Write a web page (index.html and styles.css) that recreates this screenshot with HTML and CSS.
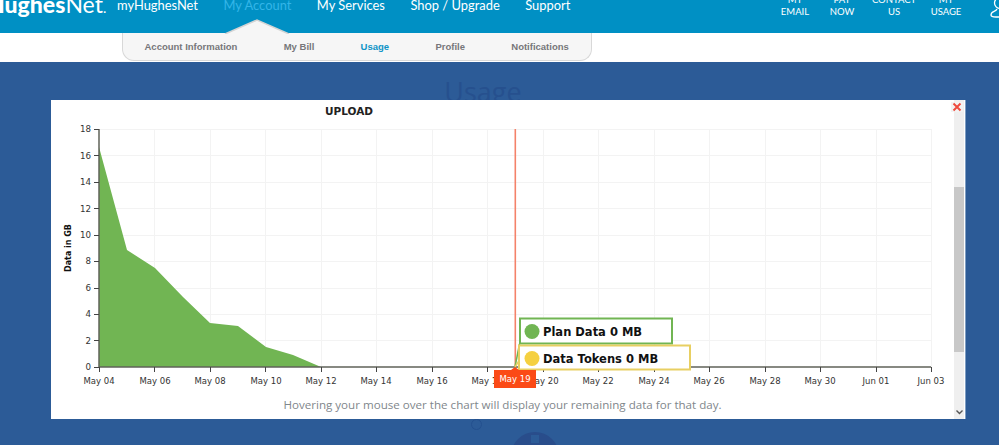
FILE: index.html
```html
<!DOCTYPE html>
<html lang="en">
<head>
    <meta charset="UTF-8">
    <meta name="viewport" content="width=device-width, initial-scale=1.0">
    <title>Usage</title>
    <link rel="stylesheet" href="styles.css">
</head>
<body>

    <div class="page">
        <header class="top-bar">
            <div class="logo"><b>Hughes</b>Net<span class="logo-dot">.</span></div>
            <nav class="main-nav">
                <a href="#">myHughesNet</a>
                <a href="#" class="active">My Account</a>
                <a href="#">My Services</a>
                <a href="#">Shop / Upgrade</a>
                <a href="#">Support</a>
            </nav>
            <nav class="quick-nav">
                <a href="#" class="quick-email">MY<br>EMAIL</a>
                <a href="#" class="quick-pay">PAY<br>NOW</a>
                <a href="#" class="quick-contact">CONTACT<br>US</a>
                <a href="#" class="quick-usage">MY<br>USAGE</a>
            </nav>
            <svg class="user-icon" width="20" height="24" viewBox="0 0 20 24">
                <circle cx="10" cy="6" r="5.5" fill="none" stroke="#fff" stroke-width="1.3"/>
                <path d="M7 12 C6 15 1 14 1 18 C1 20 3 20 6 20 H18" fill="none" stroke="#fff" stroke-width="1.3"/>
            </svg>
        </header>

        <div class="sub-strip">
            <nav class="sub-nav">
                <svg class="sub-nav-arrow" width="66" height="15" viewBox="0 0 66 15">
                    <path d="M1 15 L33 1 L65 15 Z" fill="#f6f6f6"/>
                    <path d="M1 15 L33 1 L65 15" fill="none" stroke="#d4d4d4" stroke-width="1.5"/>
                </svg>
                <a href="#">Account Information</a>
                <a href="#">My Bill</a>
                <a href="#" class="active">Usage</a>
                <a href="#">Profile</a>
                <a href="#">Notifications</a>
            </nav>
        </div>

        <main class="content">
            <h1>Usage</h1>
            <div class="spinner"></div>
            <div class="info-badge"><span class="info-dot"></span></div>
        </main>
    </div>

    <div class="modal">
        <div class="modal-body">
            <div class="chart-title">UPLOAD</div>
            <svg class="chart" width="903" height="270" viewBox="51 122 903 270">
                <!-- grid -->
                <path class="grid" d="M154.5 129V367M210.5 129V367M265.5 129V367M321.5 129V367M376.5 129V367M432.5 129V367M487.5 129V367M543.5 129V367M598.5 129V367M654.5 129V367M709.5 129V367M765.5 129V367M820.5 129V367M876.5 129V367M931.5 129V367"/>
                <path class="grid" d="M99 129.5H931M99 155.5H931M99 182.5H931M99 208.5H931M99 235.5H931M99 261.5H931M99 288.5H931M99 314.5H931M99 340.5H931"/>

                <!-- data -->
                <polygon class="area" points="99,367 99,147 127,250 155,268 183,297 210,323 238,326 266,347 293,355 321,367"/>

                <!-- axes -->
                <path class="axis" d="M99 129V367H931"/>
                <path class="tick" d="M94 129.5H99M94 155.5H99M94 182.5H99M94 208.5H99M94 235.5H99M94 261.5H99M94 288.5H99M94 314.5H99M94 340.5H99M94 367.5H99"/>
                <path class="tick" d="M99.5 367V372M154.5 367V372M210.5 367V372M265.5 367V372M321.5 367V372M376.5 367V372M432.5 367V372M487.5 367V372M543.5 367V372M598.5 367V372M654.5 367V372M709.5 367V372M765.5 367V372M820.5 367V372M876.5 367V372M931.5 367V372"/>
                <path class="cursor" d="M515.3 129V367"/>

                <g class="y-labels">
                    <text x="91" y="132">18</text>
                    <text x="91" y="159">16</text>
                    <text x="91" y="185">14</text>
                    <text x="91" y="212">12</text>
                    <text x="91" y="238">10</text>
                    <text x="91" y="264">8</text>
                    <text x="91" y="291">6</text>
                    <text x="91" y="317">4</text>
                    <text x="91" y="344">2</text>
                    <text x="91" y="370">0</text>
                </g>
                <text class="y-title" transform="translate(71 248) rotate(-90)">Data in GB</text>
                <g class="x-labels">
                    <text x="99" y="384">May 04</text>
                    <text x="155" y="384">May 06</text>
                    <text x="210" y="384">May 08</text>
                    <text x="266" y="384">May 10</text>
                    <text x="321" y="384">May 12</text>
                    <text x="376" y="384">May 14</text>
                    <text x="432" y="384">May 16</text>
                    <text x="487" y="384">May 18</text>
                    <text x="543" y="384">May 20</text>
                    <text x="598" y="384">May 22</text>
                    <text x="654" y="384">May 24</text>
                    <text x="709" y="384">May 26</text>
                    <text x="765" y="384">May 28</text>
                    <text x="820" y="384">May 30</text>
                    <text x="876" y="384">Jun 01</text>
                    <text x="931" y="384">Jun 03</text>
                </g>

                <!-- hover tooltips -->
                <path class="link-green" d="M515 367 L519.5 344"/>
                <path class="link-yellow" d="M515 367 L519.5 360"/>
                <rect class="tip tip-green" x="520" y="318.500" width="152" height="25"/>
                <circle class="dot-green" cx="532" cy="331.500" r="7.500"/>
                <text class="tip-text" x="543" y="336">Plan Data 0 MB</text>
                <rect class="tip tip-yellow" x="519" y="345.500" width="171" height="24"/>
                <circle class="dot-yellow" cx="532" cy="358.500" r="7.500"/>
                <text class="tip-text" x="543" y="363">Data Tokens 0 MB</text>
                <path class="date-tag" d="M494 370H511L515 367L519 370H536V388H494Z"/>
                <text class="date-text" x="515" y="381.500">May 19</text>
            </svg>
            <p class="chart-note">Hovering your mouse over the chart will display your remaining data for that day.</p>
        </div>
        <div class="scrollbar">
            <div class="scroll-thumb"></div>
            <svg class="scroll-down" width="7" height="5" viewBox="0 0 7 5">
                <path d="M0.500 0.500 L3.500 3.500 L6.500 0.500" fill="none" stroke="#555" stroke-width="1.400"/>
            </svg>
        </div>
        <svg class="modal-close" width="10" height="10" viewBox="0 0 10 10">
            <path d="M1.500 1.500 L8.500 8.500 M8.500 1.500 L1.500 8.500" stroke="#ee4b3e" stroke-width="2"/>
        </svg>
    </div>

</body>
</html>
```

FILE: styles.css
```css
/* Global Styles */
html, body {
    margin: 0;
    padding: 0;
    height: 100%;
    overflow: hidden;
}

body {
    font-family: "Open Sans", Arial, sans-serif;
    background-color: #2c5b97;
    position: relative;
}

a {
    text-decoration: none;
    color: inherit;
}

/* the window is scrolled a little, so the header starts above the fold */
.page {
    margin-top: -20px;
}

.top-bar {
    height: 53px;
    background-color: #0090c4;
    color: #fff;
    display: flex;
    align-items: flex-start;
    position: relative;
    overflow: hidden;
}

.logo {
    margin: 10px 0 0 -13px;
    width: 130px;
    flex-shrink: 0;
    font-family: "Lato", sans-serif;
    font-size: 23px;
    line-height: 28px;
    white-space: nowrap;
}

.logo b {
    font-weight: 900;
}

.logo-dot {
    font-size: 14px;
}

.main-nav {
    display: flex;
    gap: 25.500px;
    font-family: "Lato", sans-serif;
    font-size: 12.900px;
    line-height: 20px;
    margin-top: 15px;
    white-space: nowrap;
}

.main-nav .active {
    color: #33b5e8;
}

.quick-nav {
    display: flex;
    margin-left: auto;
    margin-top: 14px;
    font-family: "Lato", sans-serif;
    font-size: 9.500px;
    line-height: 12px;
    text-align: center;
    white-space: nowrap;
}

.quick-email { width: 46px; }
.quick-pay { width: 48px; }
.quick-contact { width: 56px; }
.quick-usage { width: 48px; }

.user-icon {
    margin: 17px -11px 0 20px;
    flex-shrink: 0;
}

.sub-strip {
    height: 29px;
    background-color: #fff;
    padding-left: 122px;
}

.sub-nav {
    width: 446px;
    height: 27px;
    padding-left: 21.500px;
    background-color: #f6f6f6;
    border: 1px solid #d8d8d8;
    border-top: none;
    border-radius: 0 0 12px 12px;
    display: flex;
    align-items: center;
    gap: 46.300px;
    font-family: "Liberation Sans", Arial, sans-serif;
    font-size: 9.500px;
    font-weight: bold;
    color: #77777a;
    position: relative;
}

.sub-nav .active {
    color: #0f94c7;
}

.sub-nav-arrow {
    position: absolute;
    left: 101px;
    top: -14px;
}

.content {
    height: 383px;
    padding-top: 14px;
    box-sizing: border-box;
    overflow: hidden;
    text-align: center;
}

.content h1 {
    margin: 0;
    padding-right: 33px;
    font-size: 27px;
    line-height: 32px;
    font-weight: 400;
    color: #26508e;
}

.spinner {
    width: 9px;
    height: 9px;
    margin: 311px 0 0 471px;
    border: 1.500px solid #24508f;
    border-radius: 50%;
}

.info-badge {
    width: 48px;
    height: 48px;
    margin: 2px 0 0 511px;
    border-radius: 50%;
    background-color: #294d8b;
    display: flex;
    justify-content: center;
}

.info-dot {
    width: 8px;
    height: 8px;
    margin-top: 3px;
    background-color: #2c5b97;
}

/* Modal */
.modal {
    position: absolute;
    left: 51px;
    top: 100px;
    width: 914px;
    height: 319px;
    background-color: #fff;
    display: flex;
    box-shadow: 1px 0 0 #7f9fc4;
}

.modal-body {
    width: 903px;
}

.chart-title {
    height: 22px;
    padding-left: 274px;
    font-family: "DejaVu Sans", sans-serif;
    font-size: 10.500px;
    font-weight: bold;
    line-height: 22px;
    color: #222;
}

.chart {
    display: block;
}

.chart text {
    font-family: "DejaVu Sans", sans-serif;
}

.grid {
    fill: none;
    stroke: #f3f3f3;
    stroke-width: 1;
}

.area {
    fill: #71b553;
}

.cursor {
    fill: none;
    stroke: #f4826a;
    stroke-width: 1.600;
}

.axis {
    fill: none;
    stroke: #60635a;
    stroke-width: 1.500;
}

.tick {
    fill: none;
    stroke: #444;
    stroke-width: 1;
}

.y-labels text {
    font-size: 8.700px;
    text-anchor: end;
    fill: #333;
}

.x-labels text {
    font-size: 8.500px;
    text-anchor: middle;
    fill: #333;
}

.chart .y-title {
    font-size: 8px;
    font-weight: bold;
    text-anchor: middle;
    fill: #111;
}

.tip {
    fill: #fff;
    stroke-width: 2;
}

.tip-green { stroke: #71b553; }
.tip-yellow { stroke: #e8cf62; }
.dot-green { fill: #71b553; }
.dot-yellow { fill: #f5d040; }

.link-green {
    fill: none;
    stroke: #71b553;
    stroke-width: 1.500;
}

.link-yellow {
    fill: none;
    stroke: #e8cf62;
    stroke-width: 1.500;
}

.chart .tip-text {
    font-size: 11.500px;
    font-weight: bold;
    fill: #111;
}

.date-tag {
    fill: #fb4a16;
}

.chart .date-text {
    font-size: 8.500px;
    text-anchor: middle;
    fill: #fff;
}

.chart-note {
    margin: 5px 0 0;
    font-size: 11.600px;
    line-height: 16px;
    text-align: center;
    color: #7f878c;
}

.scrollbar {
    width: 10px;
    background-color: #efefef;
    display: flex;
    flex-direction: column;
    align-items: center;
}

.scroll-thumb {
    width: 100%;
    height: 165px;
    margin-top: 87px;
    background-color: #c8c8c8;
}

.scroll-down {
    margin-top: 58px;
}

.modal-close {
    position: absolute;
    right: 2px;
    top: 2px;
    padding: 0 1px;
    background-color: #f3f3f3;
}
```
